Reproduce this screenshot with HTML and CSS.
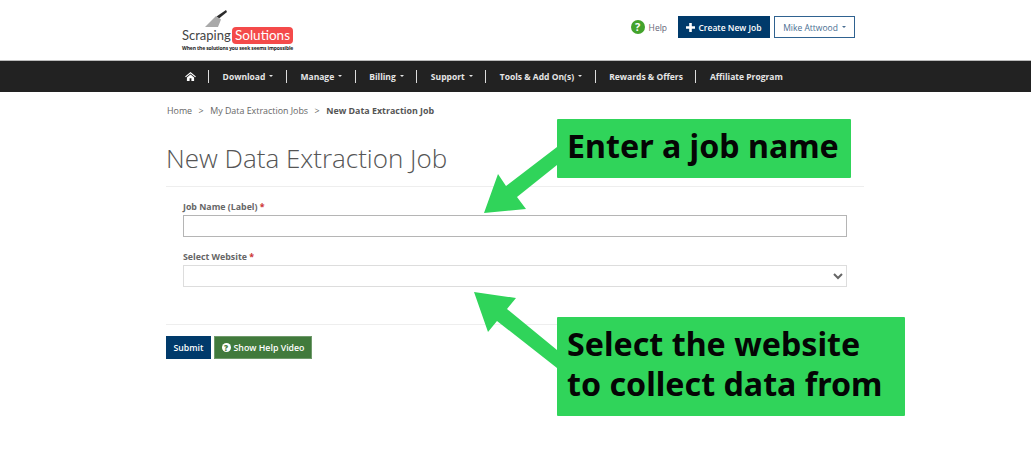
FILE: index.html
```html
<!DOCTYPE html>
<html lang="en">
<head>
<meta charset="utf-8">
<title>New Data Extraction Job</title>
<link rel="stylesheet" href="styles.css">
</head>
<body>
<header class="top">
  <a class="logo">
    <svg class="logo-tool" width="26" height="18" viewBox="0 0 26 18"><path d="M23 0l1 2-8 6.500-2.500-2z" fill="#2b2b2b"/><path d="M13 6l5 3.500L15 17H2z" fill="#a9a9a9"/></svg>
    <span class="logo-row"><span class="logo-a">Scraping</span><span class="logo-b">Solutions</span></span>
    <span class="logo-tag">When the solutions you seek seems impossible</span>
  </a>
  <div class="top-actions">
    <a class="help"><span class="help-icon">?</span>Help</a>
    <a class="btn-create"><svg width="9" height="9" viewBox="0 0 9 9"><path d="M3.2 0h2.6v3.2H9v2.6H5.800V9H3.200V5.800H0V3.200h3.200z" fill="#fff"/></svg>Create New Job</a>
    <a class="btn-user">Mike Attwood<i class="caret"></i></a>
  </div>
</header>
<nav class="nav">
  <a class="nav-item"><svg width="11" height="9" viewBox="0 0 12 10"><path d="M6 0l6 5-.8.9L6 1.700.8 5.900 0 5zM2 6l4-3.200L10 6v4H7V7H5v3H2z" fill="#fff"/></svg></a>
  <a class="nav-item">Download<i class="caret"></i></a>
  <a class="nav-item">Manage<i class="caret"></i></a>
  <a class="nav-item">Billing<i class="caret"></i></a>
  <a class="nav-item">Support<i class="caret"></i></a>
  <a class="nav-item">Tools &amp; Add On(s)<i class="caret"></i></a>
  <a class="nav-item">Rewards &amp; Offers</a>
  <a class="nav-item">Affiliate Program</a>
</nav>
<main class="main">
  <div class="crumbs"><span>Home</span><span>&gt;</span><span>My Data Extraction Jobs</span><span>&gt;</span><b>New Data Extraction Job</b></div>
  <h1 class="title">New Data Extraction Job</h1>
  <form class="form">
    <label class="label">Job Name (Label) <em>*</em></label>
    <input class="field" type="text">
    <label class="label label-second">Select Website <em>*</em></label>
    <select class="field field-select"><option></option></select>
  </form>
  <div class="actions">
    <button class="btn-submit" type="button">Submit</button>
    <button class="btn-video" type="button"><span class="video-icon">?</span>Show Help Video</button>
  </div>
</main>
<svg class="arrow" width="1031" height="460" viewBox="0 0 1031 460">
  <path d="M484 213L498 174 506 186 557 147V165L517 197 526 209z"/>
  <path d="M474 292L516 298 507 309 557 350V368L497 321 488 332z"/>
</svg>
<div class="note note-one">Enter a job name</div>
<div class="note note-two">Select the website<br>to collect data from</div>
</body>
</html>
```
FILE: styles.css
```css
* { box-sizing: border-box; }
html, body { margin: 0; height: 460px; overflow: hidden; }
body { background: #fff; font-family: "Open Sans", sans-serif; color: #555; position: relative; }
.top { height: 60px; padding: 16px 176px 0 182px; display: flex; justify-content: space-between; align-items: flex-start; }
.logo { position: relative; display: block; width: 112px; height: 40px; }
.logo-tool { position: absolute; left: 21px; top: -6px; }
.logo-row { position: absolute; left: 0; top: 11px; display: flex; align-items: center; font-family: "Lato", sans-serif; font-size: 13px; line-height: 17px; }
.logo-a { color: #444; width: 50px; white-space: nowrap; }
.logo-b { background: #f44a4a; color: #fff; border-radius: 4px; width: 61px; text-align: center; font-size: 13.500px; }
.logo-tag { position: absolute; left: 0; top: 29px; font-size: 5px; line-height: 7px; font-weight: 700; color: #222; white-space: nowrap; letter-spacing: -.13px; }
.top-actions { display: flex; align-items: center; height: 22px; }
.help { display: flex; align-items: center; font-size: 8.500px; color: #667; margin-right: 11px; }
.help-icon { width: 14px; height: 14px; border-radius: 50%; background: #43a32c; color: #fff; font-size: 11px; font-weight: 700; line-height: 14px; text-align: center; margin-right: 4px; }
.btn-create { width: 92px; height: 22px; background: #003a6b; color: #fff; font-size: 8.500px; font-weight: 600; display: flex; align-items: center; justify-content: center; gap: 3px; }
.btn-user { width: 81px; height: 22px; margin-left: 4px; border: 1px solid #2f6290; color: #4a6f92; font-size: 8.500px; display: flex; align-items: center; justify-content: center; }
.caret { display: inline-block; width: 0; height: 0; border: 2.500px solid transparent; border-top-color: currentColor; border-bottom: 0; margin-left: 4px; vertical-align: middle; }
.nav { height: 32px; background: #222; border-top: 1px solid #bbb; padding: 0 0 1px 171px; display: flex; align-items: center; }
.nav-item { color: #e6e6e6; font-size: 8.500px; font-weight: 700; padding: 0 12.500px 0 13.600px; line-height: 13px; height: 13px; display: flex; align-items: center; border-right: 1px solid #ddd; white-space: nowrap; }
.nav-item:first-child { padding: 0 12px 0 14px; }
.nav-item:last-child { border-right: 0; }
.main { width: 698px; margin-left: 166px; }
.crumbs { margin-top: 12px; height: 13px; display: flex; gap: 6.500px; font-size: 8.900px; line-height: 13px; color: #666; padding-left: 1px; }
.crumbs b { color: #555; }
.title { margin: 21px 0 0; height: 49px; font-size: 26px; line-height: 40px; font-weight: 300; color: #555; border-bottom: 1px solid #eee; }
.form { padding: 14px 17px 0; height: 138px; border-bottom: 1px solid #eee; }
.label { display: block; font-size: 8.800px; font-weight: 700; line-height: 13px; height: 14px; color: #666; }
.label em { color: #c33; font-style: normal; }
.label-second { margin-top: 14px; }
.field { display: block; width: 664px; height: 22px; border: 1px solid #b5b5b5; background: #fff; border-radius: 0; margin: 0; padding: 0; }
.field-select { border-color: #ddd; color: #666; }
.actions { margin-top: 11px; display: flex; gap: 3px; }
.btn-submit, .btn-video { height: 23px; border: 1px solid #9bb; color: #fff; font-family: inherit; font-size: 8.700px; font-weight: 600; padding: 0; display: flex; align-items: center; justify-content: center; }
.btn-submit { width: 45px; background: #003a6b; border-color: #003a6b; }
.btn-video { width: 98px; background: #417a3c; border-color: #6f9a6b; font-size: 8.800px; }
.video-icon { width: 9px; height: 9px; border-radius: 50%; background: #fff; color: #417a3c; font-size: 8px; line-height: 9px; font-weight: 800; margin-right: 3px; }
.arrow { position: absolute; left: 0; top: 0; fill: #30d45a; }
.note { position: absolute; background: #30d45a; color: #050505; font-family: "Noto Sans", sans-serif; font-weight: 700; font-size: 32.200px; line-height: 40px; border-radius: 1px; padding-left: 10px; white-space: nowrap; }
.note-one { left: 557px; top: 119px; width: 294px; height: 59px; padding-top: 7px; }
.note-two { left: 557px; top: 317px; width: 348px; height: 99px; padding-top: 7px; }
```
